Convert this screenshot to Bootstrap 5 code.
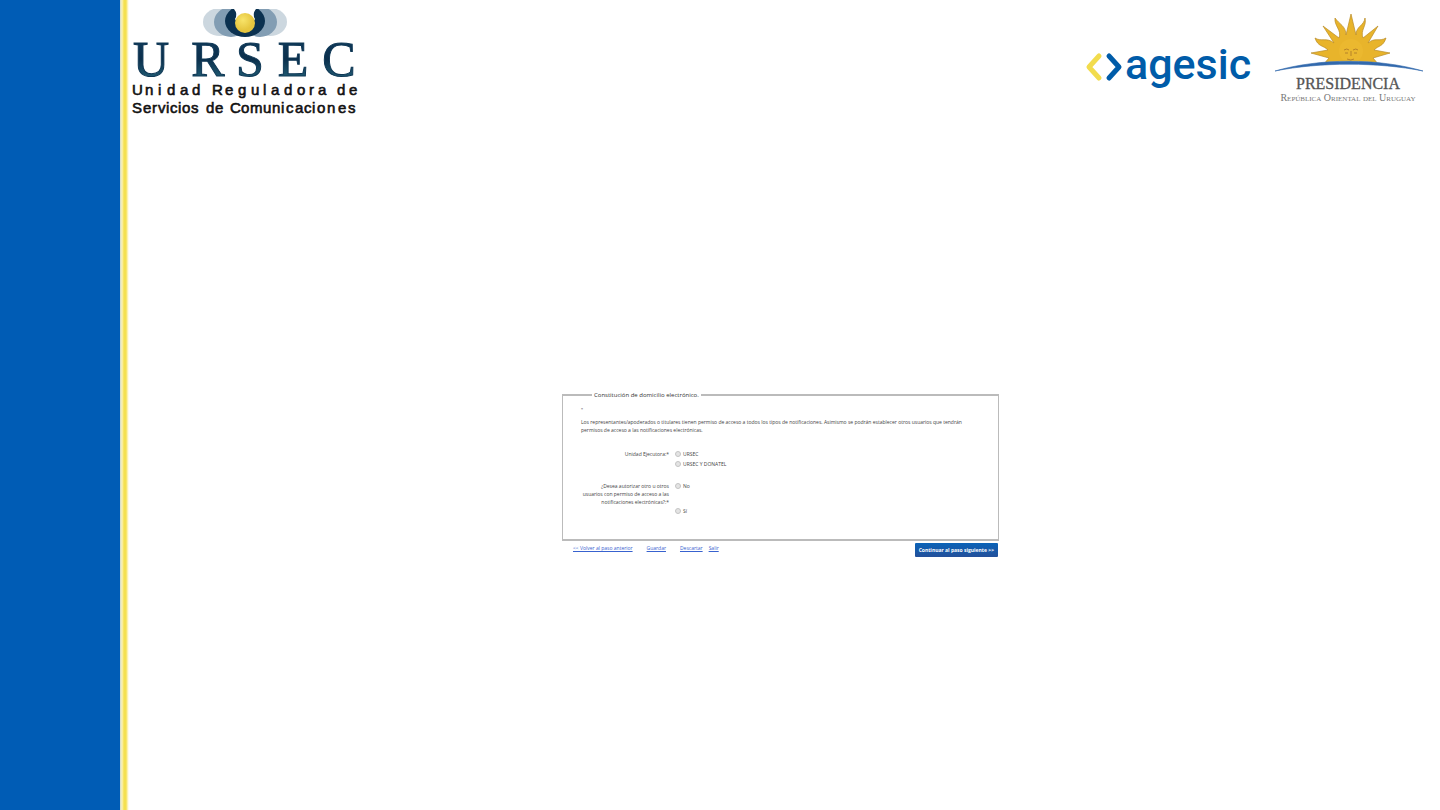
<!DOCTYPE html>
<html lang="es">
<head>
<meta charset="utf-8">
<meta name="viewport" content="width=device-width, initial-scale=1">
<title>Constitución de domicilio electrónico</title>
<link href="https://cdn.jsdelivr.net/npm/bootstrap@5.3.0/dist/css/bootstrap.min.css" rel="stylesheet">
<style>
  body { font-family: "Open Sans", "Liberation Sans", sans-serif; background: #fff; color: #444; }
  .side-band { width: 120px; background: #005cb5; }
  .side-stripe { width: 9px; background: linear-gradient(90deg, #cfd9cf 0, #fbf3b4 2px, #f4e04f 4px, #f4e04f 6px, #fff8cf 8px, #fff 9px); }
  .brand-bar { padding: 8px 16px 0 2px; }
  .brand-right { gap: 20px; }
  .step-form { width: 437px; margin: 273px 8px 0 0; font-size: 5px; line-height: 8px; }
  .step-box { border: 2px solid #bbb; border-left-width: 1px; border-right-width: 1px; padding: 0 28px 24px 18px; }
  .step-box legend { float: none; width: auto; margin: 0 0 0 11px; padding: 0 2px; font-size: 6px; line-height: 8px; color: #333; }
  .mark-line { margin-top: 7px; }
  .q-grid { display: grid; grid-template-columns: 88px 1fr; column-gap: 6px; }
  .q-label { text-align: right; }
  .q-first { margin-top: 16px; }
  .q-second { margin-top: 14px; }
  .opt { display: flex; align-items: center; gap: 2px; height: 8px; }
  .opt-input { appearance: none; width: 6px; height: 6px; margin: 0; border: 1px solid #c4c4c4; border-radius: 50%; background: #e4e4e4; }
  .opt-input:checked { background: #005cb5; }
  .opts-close { display: grid; row-gap: 2px; }
  .opts-far { display: grid; row-gap: 17px; }
  .step-links { padding: 3px 0 0 11px; }
  .step-links a { color: #3862cf; }
  .gap-wide { margin-right: 14px; }
  .gap-tight { margin-right: 6px; }
  .btn-next { font-size: 5px; line-height: 8px; padding: 3px 4px; margin: 2px 1px 0 0; border: 0; border-radius: 1px; color: #fff; font-weight: 700; background: linear-gradient(#0a63b8, #24509a); }
  .btn-next:hover { color: #fff; }
</style>
</head>
<body>
<div class="d-flex min-vh-100">
  <div class="side-band flex-shrink-0"></div>
  <div class="side-stripe flex-shrink-0"></div>
  <div class="flex-grow-1 d-flex flex-column">
    <header class="brand-bar d-flex justify-content-between align-items-start">
      <svg width="230" height="110" viewBox="131 8 230 110" role="img" aria-label="URSEC">
        <defs>
          <linearGradient id="navy" x1="0" y1="0" x2="0" y2="1"><stop offset="0" stop-color="#123f61"/><stop offset=".5" stop-color="#0b2f4c"/><stop offset="1" stop-color="#2b7186"/></linearGradient>
          <radialGradient id="ball" cx=".4" cy=".35"><stop offset="0" stop-color="#f8e46a"/><stop offset="1" stop-color="#e6c63f"/></radialGradient>
          <clipPath id="topcut"><rect x="131" y="9" width="230" height="40"/></clipPath>
        </defs>
        <g clip-path="url(#topcut)">
          <ellipse cx="220" cy="22" rx="17" ry="14" fill="#ccd7df"/>
          <ellipse cx="270" cy="22" rx="17" ry="14" fill="#ccd7df"/>
          <ellipse cx="231" cy="22" rx="17" ry="15" fill="#829db3"/>
          <ellipse cx="260" cy="22" rx="17" ry="15" fill="#829db3"/>
          <ellipse cx="245" cy="21" rx="20" ry="16" fill="#0b3150"/>
          <path d="M234 9h22q-4 5-1 10a11 11 0 0 1-20 0q3-5-1-10z" fill="#fff"/>
          <circle cx="245" cy="23" r="10" fill="url(#ball)"/>
        </g>
        <g font-family="'Liberation Serif', serif" font-size="50" text-anchor="middle">
          <text x="151 208 250 293 339" y="76" fill="url(#navy)" stroke="#0e3755">URSEC</text>
        </g>
        <g font-family="'Liberation Sans', sans-serif" font-size="15" fill="#111" stroke="#111" stroke-width=".6">
          <text y="95" x="132 145 158 167 180 192 205 212 225 238 251 263 271 284 297 309 318 330 337 349">Unidad Reguladora de</text>
          <text y="113" x="132 143 152 158 166 170 178 182 191 200 206 215 225 230 241 250 263 272 281 286 295 304 312 317 327 338 348">Servicios de Comunicaciones</text>
        </g>
      </svg>
      <div class="brand-right d-flex align-items-start">
        <svg width="170" height="100" viewBox="1084 8 170 100" role="img" aria-label="agesic">
          <g fill="none" stroke-width="5" stroke-linecap="round" stroke-linejoin="round">
            <path d="M1099 56l-10 11 10 11" stroke="#f2dc4d"/>
            <path d="M1109 56l10 11-10 11" stroke="#005ca9"/>
          </g>
          <text x="1125" y="79" font-family="Roboto, sans-serif" font-weight="500" font-size="43" fill="#005ca9">agesic</text>
        </svg>
        <svg width="150" height="100" viewBox="1273 8 150 100" role="img" aria-label="Presidencia">
          <path fill="#e8b42b" stroke="#b98b27" stroke-width=".7" stroke-linejoin="round" d="M1322 65L1328 58 1310 53 1327 50C1322 45 1317 47 1314 38C1320 42 1326 37 1333 43L1322 26 1338 38C1341 30 1333 26 1334 18C1338 24 1345 26 1345 35L1350 14 1355 35C1355 26 1363 26 1364 18C1366 26 1359 30 1362 38L1377 26 1367 43C1374 37 1378 42 1385 38C1382 47 1378 45 1373 50L1389 53 1372 58 1378 65z"/>
          <circle cx="1350" cy="51" r="12" fill="#ebb82f"/>
          <path d="M1343 50q3-2 5 0m4 0q3-2 5 0m-13 3h3m6 0h3m-6-2v5m-4 3q4 2 7 0" fill="none" stroke="#b5822a"/>
          <path d="M1274 71c45-13 103-13 148 0v3h-148z" fill="#fff"/>
          <path d="M1274 71c45-13 103-13 148 0-45-9-103-9-148 0z" fill="#3269ad" stroke="#3269ad" stroke-width=".6"/>
          <g font-family="'Liberation Serif', serif" text-anchor="middle">
            <text x="1347" y="89" font-size="16" fill="#555" stroke="#555" stroke-width=".3">PRESIDENCIA</text>
            <text x="1347" y="101" font-size="10" fill="#777" font-variant="small-caps">República Oriental del Uruguay</text>
          </g>
        </svg>
      </div>
    </header>
    <main class="d-flex justify-content-center">
      <form class="step-form">
        <fieldset class="step-box">
          <legend>Constitución de domicilio electrónico.</legend>
          <div class="mark-line">"</div>
          <p class="mt-1 mb-0">Los representantes/apoderados o titulares tienen permiso de acceso a todos los tipos de notificaciones. Asimismo se podrán establecer otros usuarios que tendrán permisos de acceso a las notificaciones electrónicas.</p>
          <div class="q-grid q-first" role="radiogroup" aria-labelledby="q-unit">
            <div class="q-label" id="q-unit">Unidad Ejecutora:*</div>
            <div class="opts-close">
              <div class="opt"><input class="opt-input" type="radio" name="unidad" id="u1"><label for="u1">URSEC</label></div>
              <div class="opt"><input class="opt-input" type="radio" name="unidad" id="u2"><label for="u2">URSEC Y DONATEL</label></div>
            </div>
          </div>
          <div class="q-grid q-second" role="radiogroup" aria-labelledby="q-auth">
            <div class="q-label" id="q-auth">¿Desea autorizar otro u otros usuarios con permiso de acceso a las notificaciones electrónicas?:*</div>
            <div class="opts-far">
              <div class="opt"><input class="opt-input" type="radio" name="autorizar" id="a1"><label for="a1">No</label></div>
              <div class="opt"><input class="opt-input" type="radio" name="autorizar" id="a2"><label for="a2">Sí</label></div>
            </div>
          </div>
        </fieldset>
        <div class="d-flex justify-content-between align-items-start">
          <nav class="step-links d-flex">
            <a class="gap-wide" href="#">&lt;&lt; Volver al paso anterior</a>
            <a class="gap-wide" href="#">Guardar</a>
            <a class="gap-tight" href="#">Descartar</a>
            <a href="#">Salir</a>
          </nav>
          <button type="button" class="btn btn-next">Continuar al paso siguiente &gt;&gt;</button>
        </div>
      </form>
    </main>
  </div>
</div>
<script src="https://cdn.jsdelivr.net/npm/bootstrap@5.3.0/dist/js/bootstrap.bundle.min.js"></script>
</body>
</html>
